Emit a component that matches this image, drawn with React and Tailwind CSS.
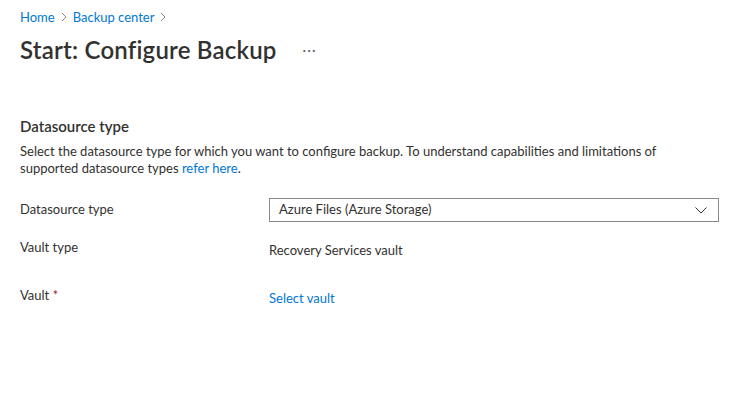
export default function App() {
  const font = { fontFamily: '"Segoe UI", Lato, "Open Sans", sans-serif' };
  return (
    <div className="w-[748px] h-[414px] bg-white text-[#323130] overflow-hidden" style={font}>
      <div className="pl-[20px] pr-[29px]">
        <div className="pt-[7px] flex items-center text-[13px] leading-[20px] text-[#0078d4]">
          <span>Home</span>
          <svg width="16" height="16" viewBox="0 0 16 16" className="mx-[1px]"><path d="M6 4l4 4-4 4" fill="none" stroke="#8a8886" strokeWidth="1"/></svg>
          <span>Backup center</span>
          <svg width="16" height="16" viewBox="0 0 16 16" className="mx-[1px]"><path d="M6 4l4 4-4 4" fill="none" stroke="#8a8886" strokeWidth="1"/></svg>
        </div>
        <div className="flex items-center mt-[6px] h-[34px]">
          <h1 className="text-[24px] font-semibold leading-[34px] text-[#323130] tracking-[0.2px]">Start: Configure Backup</h1>
          <span className="ml-[26px] text-[14px] text-[#605e5c] tracking-[1px] leading-[20px]">···</span>
        </div>
        <h2 className="mt-[49px] text-[15px] font-semibold leading-[20px]">Datasource type</h2>
        <p className="mt-[7px] text-[13px] leading-[17px] max-w-[680px]">
          Select the datasource type for which you want to configure backup. To understand capabilities and limitations of supported datasource types <a className="text-[#0078d4]">refer here</a>.
        </p>
        <div className="mt-[21px] flex items-center h-[24px]">
          <div className="w-[249px] text-[13px]">Datasource type</div>
          <div className="flex-1 h-[24px] border border-[#8a8886] flex items-center justify-between pl-[9px] pr-[10px] text-[13px]">
            <span>Azure Files (Azure Storage)</span>
            <svg width="14" height="14" viewBox="0 0 14 14"><path d="M1.5 4.5l5.5 5.5 5.5-5.5" fill="none" stroke="#323130" strokeWidth="1"/></svg>
          </div>
        </div>
        <div className="mt-[16px] flex text-[13px]">
          <div className="w-[249px] leading-[18px]">Vault type</div>
          <div className="pt-[3px] leading-[18px]">Recovery Services vault</div>
        </div>
        <div className="mt-[27px] flex text-[13px]">
          <div className="w-[249px] leading-[18px]">Vault <span className="text-[#a4262c]">*</span></div>
          <div className="pt-[3px] leading-[18px] text-[#0078d4]">Select vault</div>
        </div>
      </div>
    </div>
  );
}
